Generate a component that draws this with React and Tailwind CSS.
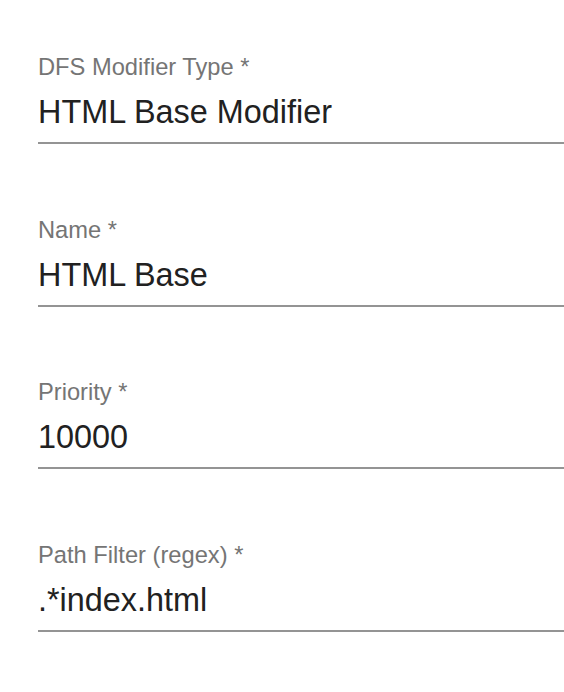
const fields = [
  { label: "DFS Modifier Type *", value: "HTML Base Modifier" },
  { label: "Name *", value: "HTML Base" },
  { label: "Priority *", value: "10000" },
  { label: "Path Filter (regex) *", value: ".*index.html" },
];

export default function App() {
  return (
    <div
      className="min-h-[692px] w-[564px] bg-white pl-[38px] pt-[55px] flex flex-col gap-[73.6px]"
      style={{ fontFamily: '"Liberation Sans", Arial, sans-serif' }}
    >
      {fields.map((f) => (
        <div key={f.label} className="flex flex-col border-b-2 border-[#949494] pb-[10px]">
          <label className="text-[23.7px] leading-[24px] text-[#757575]">
            {f.label}
          </label>
          <div className="mt-[13px] text-[32.4px] leading-[40px] text-[#212121]">
            {f.value}
          </div>
        </div>
      ))}
    </div>
  );
}
